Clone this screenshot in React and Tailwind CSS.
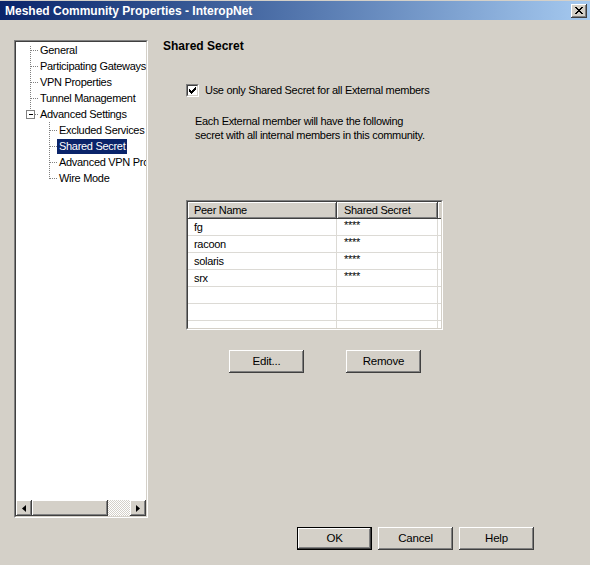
import React from "react";

const raised =
  "bg-[#d4d0c8] shadow-[inset_-1px_-1px_0_#404040,inset_1px_1px_0_#ffffff,inset_-2px_-2px_0_#808080,inset_2px_2px_0_#d4d0c8]";

const tree = [
  { label: "General", level: 1, first: true },
  { label: "Participating Gateways", level: 1 },
  { label: "VPN Properties", level: 1 },
  { label: "Tunnel Management", level: 1 },
  { label: "Advanced Settings", level: 1, expander: true },
  { label: "Excluded Services", level: 2 },
  { label: "Shared Secret", level: 2, selected: true },
  { label: "Advanced VPN Properties", level: 2 },
  { label: "Wire Mode", level: 2, last: true },
];

const peers = ["fg", "racoon", "solaris", "srx", "", "", ""];

function Connector({ item }) {
  const dot = { stroke: "#808080", strokeWidth: 1, strokeDasharray: "1 1" };
  if (item.level === 1) {
    return (
      <svg width="22" height="16" className="shrink-0" shapeRendering="crispEdges">
        <line x1="14.5" y1={item.first ? 4 : 0} x2="14.5" y2={item.expander ? 4 : 16} {...dot} />
        <line x1={item.expander ? 19 : 15} y1="8.5" x2="22" y2="8.5" {...dot} />
        {item.expander && (
          <g>
            <rect x="10.5" y="4.5" width="8" height="8" fill="#fff" stroke="#808080" />
            <line x1="12.5" y1="8.5" x2="17" y2="8.5" stroke="#000" />
          </g>
        )}
      </svg>
    );
  }
  return (
    <svg width="41" height="16" className="shrink-0" shapeRendering="crispEdges">
      <line x1="33.5" y1="0" x2="33.5" y2={item.last ? 9 : 16} {...dot} />
      <line x1="34" y1="8.5" x2="41" y2="8.5" {...dot} />
    </svg>
  );
}

function Sunken({ className, children }) {
  return (
    <div className={"border border-t-[#808080] border-l-[#808080] border-b-white border-r-white " + className}>
      <div className="flex h-full flex-col border border-t-[#404040] border-l-[#404040] border-b-[#d4d0c8] border-r-[#d4d0c8] bg-white">
        {children}
      </div>
    </div>
  );
}

function Button({ children, isDefault }) {
  return (
    <button
      className={
        "h-[23px] w-[75px] text-[11.5px] tracking-[-0.2px] text-black " +
        raised +
        (isDefault ? " border border-black" : "")
      }
    >
      {children}
    </button>
  );
}

export default function App() {
  return (
    <div
      className="flex h-[565px] w-[590px] flex-col overflow-hidden bg-[#d4d0c8] text-[11px] tracking-[-0.3px] text-black"
      style={{ fontFamily: '"Liberation Sans", Arial, sans-serif' }}
    >
      {/* title bar */}
      <div className="flex h-[20px] shrink-0 items-center justify-between border-t border-[#d4d0c8] bg-gradient-to-r from-[#0a246a] to-[#a6caf0] pl-[5px] pr-[3px]">
        <span className="text-[12px] font-bold leading-none tracking-normal text-white">
          Meshed Community Properties - InteropNet
        </span>
        <div className={"flex h-[14px] w-[16px] items-center justify-center " + raised}>
          <svg width="8" height="7" viewBox="0 0 8 7" shapeRendering="crispEdges">
            <path d="M0 0h2v1h1v1h2V1h1V0h2v1H7v1H6v1H5v1h1v1h1v1h1v1H6V6H5V5H3v1H2v1H0V6h1V5h1V4h1V3H2V2H1V1H0z" fill="#000" />
          </svg>
        </div>
      </div>

      <div className="flex pt-[18px]">
        {/* tree */}
        <Sunken className="ml-[14px] mt-[2px] h-[478px] w-[134px]">
          <div className="flex flex-1 flex-col overflow-hidden">
            {tree.map((item) => (
              <div key={item.label} className="flex h-[16px] items-center whitespace-nowrap">
                <Connector item={item} />
                <span
                  className={
                    "px-[2px] leading-[15px] " + (item.selected ? "bg-[#0a246a] text-white" : "")
                  }
                >
                  {item.label}
                </span>
              </div>
            ))}
          </div>
          <div className="flex h-[16px] shrink-0">
            <div className={"flex w-[16px] items-center justify-center " + raised}>
              <svg width="4" height="7"><path d="M4 0v7L0 3.5z" fill="#000" /></svg>
            </div>
            <div className={"w-[76px] " + raised}></div>
            <div className="flex-1 bg-[repeating-conic-gradient(#ffffff_0_25%,#d4d0c8_0_50%)] bg-[length:2px_2px]"></div>
            <div className={"flex w-[16px] items-center justify-center " + raised}>
              <svg width="4" height="7"><path d="M0 0v7l4-3.5z" fill="#000" /></svg>
            </div>
          </div>
        </Sunken>

        {/* content */}
        <div className="ml-[15px] flex flex-col">
          <div className="text-[12px] font-bold leading-[16px] tracking-normal">Shared Secret</div>

          <div className="ml-[23px] mt-[28px] flex h-[16px] items-center gap-[6px]">
            <div className="h-[13px] w-[13px] border border-t-[#808080] border-l-[#808080] border-b-white border-r-white">
              <div className="flex h-full w-full items-center justify-center border border-t-[#404040] border-l-[#404040] border-b-[#d4d0c8] border-r-[#d4d0c8] bg-white">
                <svg width="7" height="7" viewBox="0 0 7 7" shapeRendering="crispEdges">
                  <path d="M6 0h1v3H6v1H5v1H4v1H3v1H2V6H1V5H0V2h1v1h1v1h1V3h1V2h1V1h1z" fill="#000" />
                </svg>
              </div>
            </div>
            <span className="leading-[16px]">Use only Shared Secret for all External members</span>
          </div>

          <p className="ml-[32px] mt-[16px] leading-[14px]">
            Each External member will have the following
            <br />
            secret with all internal members in this community.
          </p>

          <Sunken className="ml-[23px] mt-[58px] h-[130px] w-[257px]">
            <div className="grid grid-cols-[149px_101px_1fr] overflow-hidden">
              <div className="h-[17px] border-b border-r border-b-[#404040] border-r-[#404040] bg-[#d4d0c8] pl-[6px] leading-[16px] shadow-[inset_1px_1px_0_#ffffff,inset_-1px_-1px_0_#808080]">
                Peer Name
              </div>
              <div className="h-[17px] border-b border-r border-b-[#404040] border-r-[#404040] bg-[#d4d0c8] pl-[7px] leading-[16px] shadow-[inset_1px_1px_0_#ffffff,inset_-1px_-1px_0_#808080]">
                Shared Secret
              </div>
              <div className="h-[17px] border-b border-b-[#404040] bg-[#d4d0c8] shadow-[inset_1px_1px_0_#ffffff]"></div>
              {peers.map((p, i) => (
                <React.Fragment key={i}>
                  <div className="h-[17px] border-b border-r border-[#dcdad5] pl-[6px] leading-[16px]">{p}</div>
                  <div className="h-[17px] border-b border-r border-[#dcdad5] pl-[7px] text-[11px] leading-[12px]">
                    {p ? "****" : ""}
                  </div>
                  <div className="h-[17px] border-b border-[#dcdad5]"></div>
                </React.Fragment>
              ))}
            </div>
          </Sunken>

          <div className="ml-[66px] mt-[20px] flex gap-[42px]">
            <Button>Edit...</Button>
            <Button>Remove</Button>
          </div>
        </div>
      </div>

      {/* dialog buttons */}
      <div className="mt-[9px] flex justify-end gap-[6px] pr-[56px]">
        <Button isDefault>OK</Button>
        <Button>Cancel</Button>
        <Button>Help</Button>
      </div>
    </div>
  );
}
